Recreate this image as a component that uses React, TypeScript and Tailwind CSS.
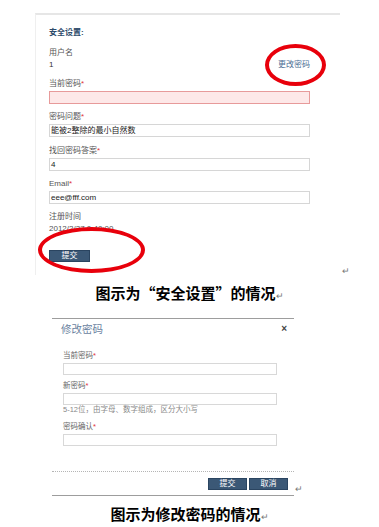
const font = "font-['Liberation_Sans','Noto_Sans_CJK_SC',sans-serif]"
const cjk = "font-['Noto_Sans_CJK_SC',sans-serif]"

const Star = () => <span className="text-[#e0343a]">*</span>

const Field = ({ label, value, pink, star = true }: { label: string; value?: string; pink?: boolean; star?: boolean }) => (
    <div>
        <p className="leading-[12px] text-[8px] text-[#555]">{label}{star && <Star />}</p>
        <div
            className={
                pink
                    ? "mt-[1px] h-[13px] w-[261px] border border-[#e79a9a] bg-[#fde8e8]"
                    : "mt-[1px] h-[13px] w-[261px] border border-[#d6d6d6] bg-white px-[1px] text-[8px] leading-[11px] text-[#222]"
            }
        >
            {value}
        </div>
    </div>
)

const ModalField = ({ label, hint }: { label: string; hint?: string }) => (
    <div>
        <p className="leading-[12px] text-[7.5px] text-[#666]">{label}<Star /></p>
        <div className="mt-[1px] h-[12px] w-[214px] border border-[#d8d8d8] bg-white" />
        {hint && <p className="leading-[10px] text-[7.5px] text-[#888]">{hint}</p>}
    </div>
)

const Btn = ({ children, w }: { children: string; w: string }) => (
    <div className={`${w} h-[12px] bg-[#3b5876] border border-[#2a4460] text-white text-[8px] leading-[10px] flex items-center justify-center`}>
        {children}
    </div>
)

const Mark = () => <span className="text-[9px] font-normal text-[#777]">↵</span>

export default function App() {
    return (
        <div className={`${font} relative w-[379px] h-[527px] bg-white overflow-hidden`}>
            {/* 安全设置 */}
            <div className="flex items-end">
                <div className="ml-[35px] mt-[13px] h-[262px] w-[305px] border-t-2 border-t-[#e6e6e6] border-l border-l-[#efefef] pl-[13px] pt-[12px]">
                    <p className="leading-[12px] text-[8px] font-bold text-[#2e4b6b]">安全设置:</p>
                    <div className="mt-[8px] flex w-[261px] items-end justify-between">
                        <div className="text-[8px] leading-[12px] text-[#555]">
                            <p>用户名</p>
                            <p className="text-[#333]">1</p>
                        </div>
                        <p className="text-[8px] leading-[12px] text-[#4a6e94]">更改密码</p>
                    </div>
                    <div className="mt-[7px]">
                        <Field label="当前密码" pink />
                    </div>
                    <div className="mt-[7px]">
                        <Field label="密码问题" value="能被2整除的最小自然数" />
                    </div>
                    <div className="mt-[8px]">
                        <Field label="找回密码答案" value="4" />
                    </div>
                    <div className="mt-[7px]">
                        <Field label="Email" value="eee@fff.com" />
                    </div>
                    <div className="mt-[7px] text-[8px] leading-[12px] text-[#555]">
                        <p>注册时间</p>
                        <p>2012/2/27 0:40:00</p>
                    </div>
                    <div className="mt-[15px]">
                        <Btn w="w-[41px]">提交</Btn>
                    </div>
                </div>
                <div className="ml-[2px] mb-[-6px]"><Mark /></div>
            </div>

            <p className={`${cjk} mt-[8px] text-center text-[15px] leading-[20px] font-bold text-black`}>
                图示为“安全设置”的情况<Mark />
            </p>

            {/* 修改密码 */}
            <div className="flex items-end">
                <div className="ml-[52px] mt-[12px] w-[242px] border-t border-t-[#9d9d9d]">
                    <div className="flex items-center justify-between pl-[9px] pr-[7px] pt-[3px]">
                        <p className="text-[10.5px] leading-[14px] text-[#6a82a0]">修改密码</p>
                        <span className="text-[10px] font-bold leading-[14px] text-[#444]">×</span>
                    </div>
                    <div className="pl-[11px] pt-[14px]">
                        <ModalField label="当前密码" />
                        <div className="mt-[5px]">
                            <ModalField label="新密码" hint="5-12位，由字母、数字组成，区分大小写" />
                        </div>
                        <div className="mt-[6px]">
                            <ModalField label="密码确认" />
                        </div>
                    </div>
                    <div className="mt-[25px] border-t border-dotted border-t-[#b5b5b5]" />
                    <div className="flex justify-end gap-[2px] pr-[6px] pt-[6px] pb-[5px] border-b border-b-[#9d9d9d]">
                        <Btn w="w-[39px]">提交</Btn>
                        <Btn w="w-[39px]">取消</Btn>
                    </div>
                </div>
                <div className="ml-[1px] mb-[-3px]"><Mark /></div>
            </div>

            <p className={`${cjk} mt-[8px] text-center text-[15px] leading-[20px] font-bold text-black`}>
                图示为修改密码的情况<Mark />
            </p>

            {/* red marker circles */}
            <div className="absolute left-[265px] top-[44px] h-[42px] w-[61px] rounded-[50%] border-[4px] border-[#e8000b]" />
            <div className="absolute left-[38px] top-[227px] h-[46px] w-[107px] rounded-[50%] border-[4px] border-[#e8000b]" />
        </div>
    )
}
